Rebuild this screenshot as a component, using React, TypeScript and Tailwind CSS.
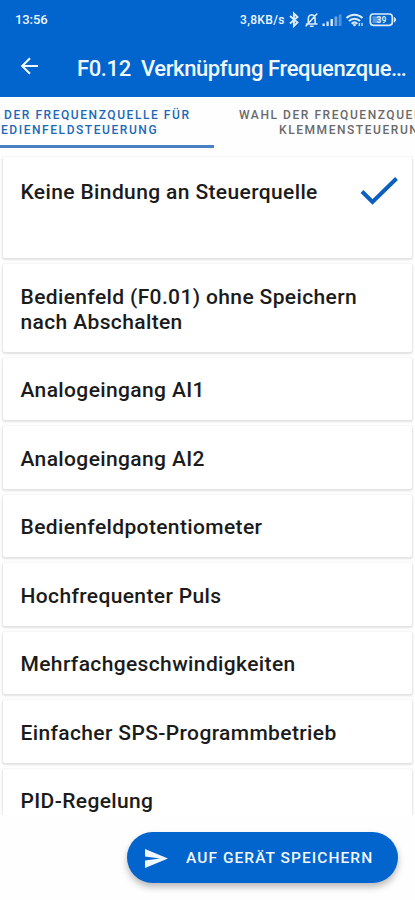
import React from "react";

const cards = [
  { text: "Keine Bindung an Steuerquelle", size: "h-[101px] pt-[22.5px]", checked: true },
  { text: "Bedienfeld (F0.01) ohne Speichern nach Abschalten", size: "h-[87.5px] pt-[21px]" },
  { text: "Analogeingang AI1", size: "h-[62.5px] pt-[20.5px]" },
  { text: "Analogeingang AI2", size: "h-[62.5px] pt-[20.5px]" },
  { text: "Bedienfeldpotentiometer", size: "h-[62.5px] pt-[20px]" },
  { text: "Hochfrequenter Puls", size: "h-[62.5px] pt-[20.5px]" },
  { text: "Mehrfachgeschwindigkeiten", size: "h-[62.5px] pt-[20px]" },
  { text: "Einfacher SPS-Programmbetrieb", size: "h-[62.5px] pt-[20.5px]" },
  { text: "PID-Regelung", size: "h-[62.5px] pt-[20px]" },
];

function StatusIcons() {
  return (
    <svg width="112" height="20" viewBox="0 0 112 20" fill="none" className="shrink-0 text-[#dcebfb]">
      <path d="M2 6 9.500 12.500 5.900 16V3.500L9.500 7 2 13.500" stroke="currentColor" strokeWidth="1.900" />
      <g stroke="currentColor" strokeWidth="1.600" strokeLinecap="round">
        <path d="M18.500 14h10.500M20.300 13.500V9c0-2.500 1.200-4 3.400-4.300 2.200.3 3.400 1.800 3.400 4.300v4.500M22.500 16.200h2.500M18.200 15.800 28.800 4" />
      </g>
      <g fill="currentColor">
        <rect x="34.500" y="13.500" width="2.200" height="2.500" />
        <rect x="38.500" y="11.500" width="2.200" height="4.500" />
        <rect x="42.500" y="9" width="2.400" height="7" />
        <rect x="46.500" y="6.500" width="2.800" height="9.500" opacity=".5" />
        <rect x="50.700" y="4.500" width="2.800" height="11.500" opacity=".35" />
      </g>
      <g stroke="currentColor" strokeWidth="2.100">
        <path d="M58.500 8c4.500-4.300 11.500-4.300 16 0M61 11c3-3 8-3 11 0M63.700 13.700c1.700-1.700 3.900-1.700 5.600 0" />
      </g>
      <circle cx="66.500" cy="15" r="1.300" fill="currentColor" />
      <path d="M71.300 13v3M74 13v3" stroke="currentColor" strokeWidth="1.300" />
      <rect x="82.300" y="4" width="22" height="11.300" rx="3" stroke="currentColor" strokeWidth="1.700" />
      <path d="M106.300 7.500c1.700.7 1.700 3.900 0 4.600z" fill="currentColor" stroke="currentColor" />
      <rect x="84.500" y="6.300" width="8" height="6.800" fill="currentColor" opacity=".4" />
      <text x="93.500" y="12.800" textAnchor="middle" fontSize="8.500" fontWeight="700" fill="currentColor">39</text>
    </svg>
  );
}

export default function App() {
  return (
    <div className="flex h-[900px] w-[415px] flex-col overflow-hidden bg-[#fefefe] font-['Roboto',sans-serif]">
      <header className="h-[97px] shrink-0 bg-[#0264cd] text-[#eff7ff]">
        <div className="flex h-[39px] items-center pl-[15px]">
          <span className="w-[225px] text-[13px] font-medium leading-none tracking-[-0.1px]">13:56</span>
          <span className="mr-[2px] w-[46px] whitespace-nowrap text-[12px] font-medium leading-none tracking-[0.350px]">3,8KB/s</span>
          <StatusIcons />
        </div>
        <div className="flex h-[57px] items-center pl-[20px]">
          <svg width="20" height="20" viewBox="0 0 20 20" className="mt-[-3px] shrink-0" fill="none" stroke="currentColor" strokeWidth="2.100">
            <path d="M18 10H2.500M10 2.200 2.200 10 10 17.800" />
          </svg>
          <h1 className="ml-[37px] mt-[2px] whitespace-pre text-[22px] font-medium leading-[28px] tracking-[-0.390px]">F0.12  Verknüpfung Frequenzque…</h1>
        </div>
      </header>

      <nav className="flex h-[51px] shrink-0 overflow-hidden text-[12px] font-medium leading-[15px] tracking-[1.560px]">
        <div className="w-[214px] shrink-0 border-b-[3px] border-[#4b7fc4] pt-[11px] text-[#1c69b9]">
          <div className="whitespace-nowrap pl-[4px]">DER FREQUENZQUELLE FÜR<br /><span className="-ml-[3px]">EDIENFELDSTEUERUNG</span></div>
        </div>
        <div className="w-[201px] shrink-0 overflow-hidden whitespace-nowrap pl-[25px] pt-[11px] text-[#6a6a6a]">
          WAHL DER FREQUENZQUELLE<br /><span className="ml-[40px]">KLEMMENSTEUERUNG</span>
        </div>
      </nav>

      <main className="flex h-[667px] shrink-0 flex-col gap-[6px] overflow-hidden px-[3px] pt-[9px]">
        {cards.map((card) => (
          <section
            key={card.text}
            className={`flex shrink-0 justify-between rounded-[2px] bg-white pl-[17.500px] pr-[14px] shadow-[0_1px_2px_1px_rgba(0,0,0,0.11)] ${card.size}`}
          >
            <p className="w-[350px] text-[21px] font-medium leading-[24.500px] tracking-[0.370px] text-[#1b1b1b]">{card.text}</p>
            {card.checked && (
              <svg width="38" height="30" viewBox="0 0 38 30" className="mt-[-3.500px] shrink-0" fill="none" stroke="#0b5fc0" strokeWidth="4">
                <path d="m2 15.500 10.500 10.500L36.500 2.500" />
              </svg>
            )}
          </section>
        ))}
      </main>

      <footer className="flex justify-end pr-[17px] pt-[17px]">
        <button className="flex h-[51px] w-[271px] items-center rounded-full bg-[#0264cd] pl-[18px] text-[#f2f8ff] shadow-[0_4px_7px_rgba(0,0,0,0.28)]">
          <svg width="23" height="19" viewBox="0 0 23 19" fill="currentColor" className="mt-[1px]">
            <path d="M0 0 23 9.500 0 19v-7.400l15-2.100-15-2.100z" />
          </svg>
          <span className="ml-[18px] mt-[3px] whitespace-nowrap text-[15.500px] font-medium leading-none tracking-[1.060px]">AUF GERÄT SPEICHERN</span>
        </button>
      </footer>
    </div>
  );
}
